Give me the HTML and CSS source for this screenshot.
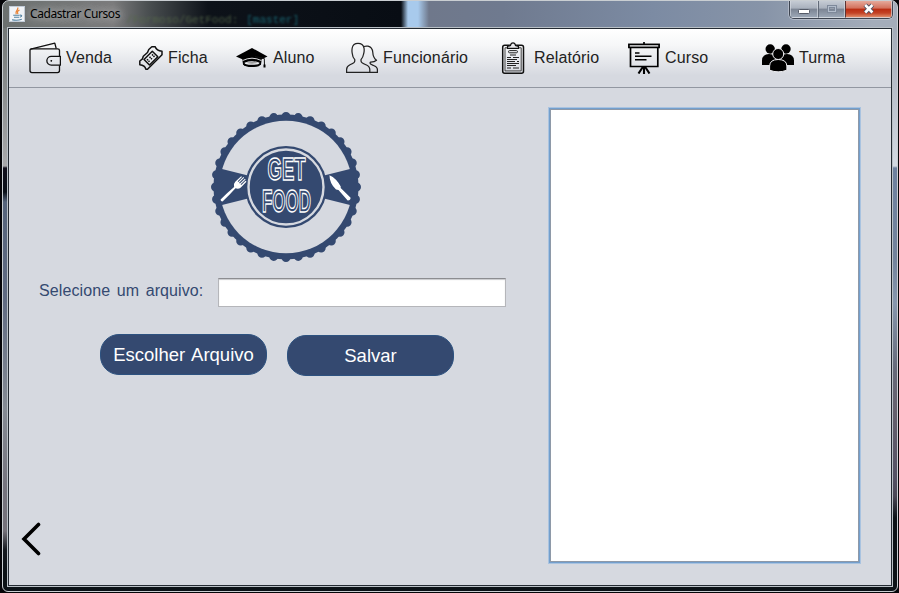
FILE: index.html
```html
<!DOCTYPE html>
<html lang="pt-BR">
<head>
<meta charset="utf-8">
<title>Cadastrar Cursos</title>
<link rel="stylesheet" href="styles.css">
</head>
<body>
<div class="window">
  <header class="titlebar">
    <svg class="app-icon" width="16" height="16" viewBox="0 0 16 16">
      <rect x=".5" y=".5" width="15" height="15" fill="#f1f4f8" stroke="#c3cdd9"/>
      <path d="M8.7 1.5C10 4 5.4 5 7.2 8.3M10.5 4C8 5.2 8.1 6.3 9 8" fill="none" stroke="#e8853a" stroke-width="1.3"/>
      <path d="M4.2 9.3h6.3M5 11.3h5M3 13.7q5 1.2 9.8-.4M10.8 9.2q2.6-.3 1.6 1.2l-1.7 1" fill="none" stroke="#5382a1" stroke-width="1.1"/>
    </svg>
    <h1 class="title">Cadastrar Cursos</h1>
    <span class="ghost ghost-path">/Formoso/GetFood:</span>
    <span class="ghost ghost-branch">[master]</span>
    <div class="controls">
      <span class="control minimize"><svg width="12" height="6"><rect x=".5" y=".5" width="11" height="4" rx="1" fill="#fff" stroke="#555b68"/></svg></span>
      <span class="control maximize"><svg width="12" height="10"><rect x="1.5" y="1.5" width="9" height="7" fill="none" stroke="#7e899a"/><rect x="2.5" y="2.5" width="7" height="5" fill="none" stroke="#b3bdcb"/><rect x="3.5" y="3.5" width="5" height="3" fill="none" stroke="#7e899a"/></svg></span>
      <span class="control close"><svg width="14" height="12" viewBox="0 0 14 12"><path d="M3.200 2 10.400 9.500M10.400 2 3.200 9.500" stroke="#4a5062" stroke-width="4.600"/><path d="M3.200 2 10.400 9.500M10.400 2 3.200 9.500" stroke="#fff" stroke-width="2.600"/></svg></span>
    </div>
  </header>
  <main class="client">
    <nav class="menu">
      <a class="item"><svg class="icon" viewBox="0 0 32 32"><g fill="none" stroke="#111" stroke-width="1.3" stroke-linejoin="round"><path d="M30.5 14.2V8.6q0-1.8-1.8-1.8H2.6q-1.6 0-1.6 1.8v20q0 2 2 2h25.500q2 0 2-2v-5.400"/><path d="M1.600 7.200 25.800 1.200 27.200 6.500"/><path d="M31.400 14.300H22.300a4.450 4.450 0 0 0 0 8.900h9.100z"/></g><circle cx="22.300" cy="18.800" r=".9"/></svg><span>Venda</span></a>
      <a class="item"><svg class="icon" viewBox="0 0 32 32"><g fill="none" stroke="#111" stroke-width="1.500" stroke-linejoin="round"><path d="M20.800 4.800H24.200Q25.500 8.800 31 9.300V12.800L28.300 15.500 16.500 27.200H14.800Q14 23.300 8.800 22.800V19L11.500 16.800 12.300 14.300 16.500 10.500 17.800 7.500Z"/><path d="M21.300 9.300 26.800 14.800 18.500 23 13 17.500Z"/></g><path d="m16 17.200 2.500 2.500M18.500 14.800l2.500 2.500M21 12.400l2.500 2.500" stroke="#111" stroke-width="1.500" stroke-dasharray="1.500 .6"/></svg><span>Ficha</span></a>
      <a class="item"><svg class="icon" viewBox="0 0 32 32"><path d="M0 14.400 16 6 31.500 14.400 16 21.600Z"/><path d="M6.200 17.300 7 22.200Q8.500 25 16 25T25 22.200L25.800 17.300Z"/><path d="M6.500 18.600Q16 13.800 25.500 18.600" fill="none" stroke="#f3f3f5" stroke-width=".9"/><path d="M8.500 20.700Q16 17.800 23.500 20.700 23.500 22.800 16 22.800T8.500 20.700Z" fill="#eff0f3"/><path d="M10 20.800Q16 19 22 20.800 16 22.500 10 20.800" fill="#999"/><path d="M19 14.500 28.300 16.500 28.500 25" fill="none" stroke="#111"/><path d="m27.500 22.500h2v3h-2z"/></svg><span>Aluno</span></a>
      <a class="item"><svg class="icon" viewBox="0 0 32 32"><g fill="none" stroke="#222" stroke-width="1.250" stroke-linejoin="round"><path d="M.600 30.400V27.500Q.600 24.500 4 22.800C8 21 9 20.500 8.800 17.700Q6.500 15 6.200 11.200 5.700 8.800 6.200 6Q7 1.400 12 1.400T18 6Q18.500 9 17.600 12 17 15.500 15 17.700C14.800 20.500 16 21 20 22.800Q23.800 24.500 23.800 27.500V30.400Z"/><path d="M17.800 4.500Q20 3.800 22 4.200 26.300 5 26.800 10.500 27 15.500 30.500 18.300 28.500 20.300 24.300 20.200C23.500 22 25 22.500 27.500 23.500Q31.400 25 31.400 27.500V30.400H24"/></g></svg><span>Funcionário</span></a>
      <a class="item"><svg class="icon" viewBox="0 0 32 32"><rect x="5.700" y="3.200" width="20.800" height="28" rx="2" fill="none" stroke="#111" stroke-width="1.500"/><path d="M10.500 5.800H8V28.900H24.200V5.800H21.500" fill="none" stroke="#333" stroke-width=".9"/><path d="M10.500 6.300V4.500L13.500 3.500Q14 .8 16 .8T18.500 3.500L21.500 4.500V6.300Z" fill="#ececef" stroke="#111" stroke-width="1.200"/><rect x="11.500" y="8.600" width="9" height="2.200" rx="1.100" fill="none" stroke="#222"/><path d="M13 13h6M10 15.500h4M16 15.500h6M10 17.500h10M10 19.500h8M20 19.500h2M10 21.500h12M10 23.500h9M10 26h4M16 26h6" stroke="#222" stroke-width="1"/></svg><span>Relatório</span></a>
      <a class="item"><svg class="icon" viewBox="0 0 32 32"><g fill="none" stroke="#000" stroke-width="1.700"><rect x=".9" y="2.400" width="30.200" height="3"/><path d="M2.500 5.500V24.500H29.800V5.500M16 0V2"/><path d="M16 25V32M14.800 25 10.500 31.500M17.200 25 21.500 31.500" stroke-width="2.100"/><path d="M7 11h4.500M7 14.300H23.500M7 17.700H18.500" stroke-width="1.500"/></g></svg><span>Curso</span></a>
      <a class="item"><svg class="icon" viewBox="0 0 32 32"><circle cx="8.200" cy="7" r="4.700"/><circle cx="24" cy="7" r="4.700"/><path d="M0 23V18.500Q.3 12 7 12Q14 12 14 18V23ZM18 23V18Q18 12 25 12Q31.700 12 32 18.500V23Z"/><g stroke="#efeff2"><circle cx="16.200" cy="12" r="5.500"/><path d="M7.600 28.200V24Q7.800 17.500 16.200 17.500T24.900 24V28.200Q16.200 31.500 7.600 28.200Z"/></g></svg><span>Turma</span></a>
    </nav>
    <div class="content">
      <section class="form">
        <svg class="logo" width="152" height="152" viewBox="-76 -76 152 152">
          <circle r="72.500" fill="#344970"/>
          <circle r="70.500" fill="none" stroke="#344970" stroke-width="9" stroke-linecap="round" stroke-dasharray="0 1" pathLength="36"/>
          <circle r="66.300" fill="#d6d9e0"/>
          <path d="M-67-18.800-36-11V11L-67 18.800ZM67-18.800 36-11V11L67 18.800Z" fill="#344970"/>
          <circle r="41" fill="#344970"/>
          <circle r="37.500" fill="none" stroke="#d6d9e0" stroke-width="2.400"/>
          <g transform="translate(-64.500 13.500) rotate(-44)" fill="#fff"><path d="M0-1.300Q9-1.700 18.500-1Q20-4 23-4L31-3.800V-2.600H25V-1.600H32V-.6H25V.6H32V1.600H25V2.600H31V3.800L23 4Q20 4 18.500 1Q9 1.700 0 1.500Q-1.500 0 0-1.300"/></g>
          <g transform="translate(42 -10.500) rotate(47)" fill="#fff"><path d="M0-2Q7-5 16-2.500L17-1.500 31-2Q33 0 31 2L17 1.500 15 3Q6 3.500 0-2Z"/></g>
          <g class="logo-text">
            <text x="-18.500" y="-6.800" textLength="38" lengthAdjust="spacingAndGlyphs">GET</text>
            <text x="-24" y="25" textLength="49" lengthAdjust="spacingAndGlyphs">FOOD</text>
          </g>
        </svg>
        <div class="field-row">
          <label for="arquivo">Selecione um arquivo:</label>
          <input id="arquivo" class="field" type="text">
        </div>
        <div class="actions">
          <button class="button">Escolher Arquivo</button>
          <button class="button save">Salvar</button>
        </div>
        <a class="back"><svg width="22" height="34" viewBox="0 0 22 34"><path d="M17.500 2.500 3 17 17.500 31.500" fill="none" stroke="#000" stroke-width="3.600" stroke-linecap="round"/></svg></a>
      </section>
      <div class="list"></div>
    </div>
  </main>
</div>
</body>
</html>
```

FILE: styles.css
```css
* { box-sizing: border-box; }

body {
  margin: 0;
  height: 593px;
  padding: 0 1px 1px 2px;
  overflow: hidden;
  background: #050508;
  font-family: "Liberation Sans", Arial, sans-serif;
}

.window {
  height: 592px;
  display: flex;
  flex-direction: column;
  padding: 0 4px 4px;
  border: 1px solid #c9ced2;
  border-radius: 7px 7px 6px 6px;
  overflow: hidden;
  background:
    linear-gradient(90deg, #6b706f 0, #7b7b7c 110px, #4a4f51 145px, #0d1219 205px, #080d14 398px, #a8caec 405px, #a8caec 415px, #6f788b 426px, #6f7a8f 500px, #7c8ba3 650px, #8794a8 760px, #a4adba 870px) 0 0 / 100% 27px no-repeat,
    linear-gradient(#737877 0, #8d9091 70px, #a8a9ab 138px, #12101c 140px, #0a1018 164px, #56657c 174px, #606b82 270px, #858b94 380px, #75747e 460px, #75727a 503px, #15191f 522px, #0b1115 545px) 0 27px / 4px 565px no-repeat,
    linear-gradient(#a3abb8 0, #d3d9e2 138px, #6e819f 140px, #73839c 230px, #8797ae 275px, #666a7a 340px, #66616e 380px, #555265 450px, #4b4857 468px, #0c1217 490px, #0c1217 560px) 100% 27px / 4px 565px no-repeat,
    #0c1217;
}

.titlebar {
  position: relative;
  height: 26px;
  flex: none;
  display: flex;
  align-items: center;
  padding-left: 2px;
}

.app-icon { display: block; }

.title {
  margin: 0 0 0 5px;
  font: 12px/16px "Noto Sans", "Open Sans", sans-serif;
  letter-spacing: -.420px;
  color: #000;
  text-shadow: 0 0 6px #b5b5b7, 0 0 10px #a0a0a2, 0 0 12px #a0a0a2;
}

.ghost {
  font: 11px/12px "Liberation Mono", monospace;
  filter: blur(1px);
  padding-top: 12px;
  white-space: nowrap;
}
.ghost-path { color: #56694a; margin-left: 6px; opacity: .8; }
.ghost-branch { color: #1c7480; margin-left: 8px; opacity: .85; }

.controls {
  position: absolute;
  top: -1px;
  right: 0;
  display: flex;
  height: 19px;
  border: 1px solid #3d4450;
  border-top: 0;
  border-radius: 0 0 5px 5px;
  box-shadow: 0 0 0 1px #c6ccd599;
  overflow: hidden;
}
.control {
  display: flex;
  align-items: center;
  justify-content: center;
  background: linear-gradient(#c5cbd4 0, #a9b1bd 45%, #7b8493 50%, #9ba6b5 100%);
  border: 1px solid #d6dbe2aa;
}
.minimize { width: 28px; padding-top: 5px; }
.maximize { width: 27px; border-left: 1px solid #626b79; }
.close {
  width: 47px;
  border-left: 1px solid #5b3434;
  background: linear-gradient(#e5a99b 0, #d3705b 45%, #b92c12 50%, #c34225 75%, #df8a68 100%);
}

.client {
  flex: 1;
  display: flex;
  flex-direction: column;
  min-height: 0;
  border: 1px solid #242b33;
  outline: 1px solid #b9c0c6;
  background: #d6d9e0;
  margin: 1px;
}

.menu {
  height: 59px;
  flex: none;
  display: grid;
  grid-template-columns: 102px 105px 110px 151px 131px 134px auto;
  padding-left: 20px;
  border-bottom: 1px solid #9297a1;
  background: linear-gradient(#fff 0, #f6f7f8 28%, #d6d9e0 80%);
}
.item {
  display: flex;
  align-items: center;
  gap: 5px;
  font-size: 16px;
  letter-spacing: .14px;
  line-height: 18px;
  color: #222;
  white-space: nowrap;
}
.icon { width: 32px; height: 32px; flex: none; }

.content {
  flex: 1;
  display: flex;
  justify-content: space-between;
  padding: 20px 31px 22px 0;
}
.form {
  width: 500px;
  display: flex;
  flex-direction: column;
}
.logo { margin: 3px 0 0 201px; display: block; }
.logo-text {
  font-family: "Liberation Sans", sans-serif;
  font-size: 31px;
  font-weight: bold;
  fill: #344970;
  stroke: #fff;
  stroke-width: 1.400px;
}

.field-row {
  display: flex;
  margin: 15px 0 0 30px;
}
.field-row label {
  width: 179px;
  font-size: 16px;
  line-height: 18px;
  padding-top: 4px;
  letter-spacing: .1px;
  word-spacing: 2px;
  color: #344970;
}
.field {
  width: 288px;
  height: 29px;
  border: 1px solid #b5b6ba;
  border-top-color: #8c8d91;
  background: #fff;
  box-shadow: inset 0 1px 1px #c8c9cd;
}

.actions {
  display: flex;
  gap: 20px;
  margin: 27px 0 0 91px;
}
.button {
  width: 167px;
  height: 41px;
  padding: 0;
  border: 1px solid #2d5280;
  border-radius: 19px;
  background: #344970;
  color: #fff;
  font: 18.500px/20px "Liberation Sans", Arial, sans-serif;
  word-spacing: 1.800px;
}
.save { margin-top: 1px; }

.back {
  margin: auto 0 7px 12px;
  width: 22px;
  height: 34px;
}
.back svg { display: block; }

.list {
  width: 311px;
  height: 455px;
  border: 1px solid #739fcd;
  background: #fff;
  box-shadow: 0 0 0 1px #a9c3e0, inset 0 0 0 1px #8e99a8;
}
```
